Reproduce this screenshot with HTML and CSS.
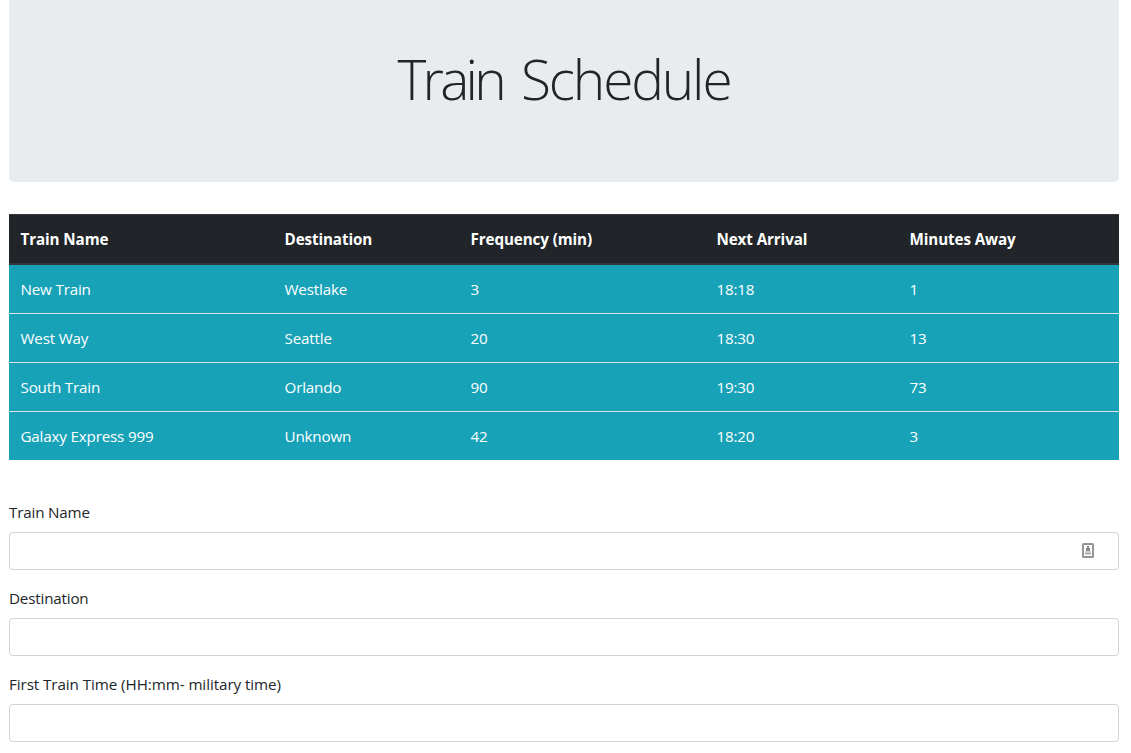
FILE: index.html
```html
<!DOCTYPE html>
<html lang="en">
<head>
<meta charset="utf-8">
<title>Train Schedule</title>
<link rel="stylesheet" href="styles.css">
</head>
<body>
<main class="container">
<header class="jumbotron"><h1 class="title"><span class="tight">Train</span> Schedule</h1></header>
<table class="table">
<colgroup><col class="c1"><col class="c2"><col class="c3"><col class="c4"><col class="c5"></colgroup>
<thead><tr><th>Train Name</th><th>Destination</th><th class="frequency">Frequency (min)</th><th>Next Arrival</th><th>Minutes Away</th></tr></thead>
<tbody>
<tr><td>New Train</td><td>Westlake</td><td>3</td><td>18:18</td><td>1</td></tr>
<tr><td>West Way</td><td>Seattle</td><td>20</td><td>18:30</td><td>13</td></tr>
<tr><td>South Train</td><td>Orlando</td><td>90</td><td>19:30</td><td>73</td></tr>
<tr><td>Galaxy Express 999</td><td>Unknown</td><td>42</td><td>18:20</td><td>3</td></tr>
</tbody>
</table>
<form class="form">
<div class="group"><label for="name">Train Name</label><div class="field"><input id="name" type="text"><svg class="autofill" viewBox="0 0 12 15" width="12" height="15"><rect x="1" y="1" width="10" height="13" rx=".5" fill="#fff" stroke="#959595" stroke-width="2"/><path d="M5 3h2v2h1v3H4V5h1z" fill="#888"/><path d="M3 8h6v2H3z" fill="#ccc"/><path d="M3 10h6v1.5H3z" fill="#aaa"/></svg></div></div>
<div class="group"><label for="dest">Destination</label><div class="field"><input id="dest" type="text"></div></div>
<div class="group"><label for="time" class="time-label">First Train Time (HH:mm- military time)</label><div class="field"><input id="time" type="text"></div></div>
</form>
</main>
</body>
</html>
```
FILE: styles.css
```css
*{box-sizing:border-box}
body{margin:0;background:#fff;color:#212529;font:400 15.2px/24px "Open Sans","Noto Sans",sans-serif;overflow:hidden;letter-spacing:-.18px}
.container{padding:0 12px 0 9px}
.jumbotron{height:182px;margin-bottom:32px;padding-top:45px;background:#e9ecef;border-radius:0 0 5px 5px;text-align:center}
.title{margin:0;font-size:55px;line-height:67px;font-weight:300;letter-spacing:-2.15px;word-spacing:6px}
.tight{letter-spacing:-3.8px}
.table{width:100%;table-layout:fixed;border-collapse:separate;border-spacing:0;color:#fff;background:#17a2b8}
.c1{width:264px}.c2{width:186px}.c3{width:246px}.c4{width:193px}
th,td{height:49px;padding:0 12px 0 11.5px;text-align:left}
th{height:51px;padding-bottom:1px;background:#212529;border-top:1px solid #32383e;border-bottom:2px solid #32383e;font-weight:700}
th,.frequency{letter-spacing:-.1px}
td{border-top:1px solid #dee2e6}
tbody tr:first-child td{height:48px;border-top:0}
.form{padding-top:40px}
.group{margin-bottom:16px}
label{display:block;height:24px;margin-bottom:8px}
.time-label{letter-spacing:-.07px}
.field{position:relative;height:38px}
input{display:block;width:100%;height:38px;border:1px solid #ced4da;border-radius:4px;padding:6px 12px;background:#fff}
.autofill{position:absolute;right:25px;top:11px}
```
